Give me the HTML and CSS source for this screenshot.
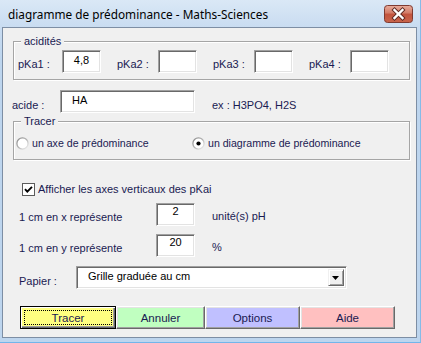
FILE: index.html
```html
<!DOCTYPE html>
<html lang="fr">
<head>
<meta charset="utf-8">
<title>diagramme de prédominance - Maths-Sciences</title>
<link rel="stylesheet" href="styles.css">
</head>
<body>
<div class="window">
  <div class="titlebar">
    <span class="title">diagramme de prédominance - Maths-Sciences</span>
    <div class="close">
      <svg width="29" height="18" viewBox="0 0 29 18">
        <defs>
          <linearGradient id="cg" x1="0" y1="0" x2="0" y2="1">
            <stop offset="0" stop-color="#e9ad9c"/>
            <stop offset="0.45" stop-color="#d27a66"/>
            <stop offset="0.5" stop-color="#c2533d"/>
            <stop offset="1" stop-color="#c8654c"/>
          </linearGradient>
        </defs>
        <rect x="0.5" y="0.5" width="28" height="17" rx="3" fill="url(#cg)" stroke="#7e3a31"/>
        <path d="M10.5 5 L18.5 13 M18.5 5 L10.5 13" stroke="#5b2720" stroke-width="4.2" stroke-linecap="square"/>
        <path d="M10.5 5 L18.5 13 M18.5 5 L10.5 13" stroke="#ffffff" stroke-width="2.4" stroke-linecap="square"/>
      </svg>
    </div>
  </div>
  <div class="client">
    <fieldset class="frame acid">
      <legend>acidités</legend>
      <div class="pka-row">
        <span class="lbl first">pKa1 :</span><div class="tb small center">4,8</div>
        <span class="lbl">pKa2 :</span><div class="tb small center"></div>
        <span class="lbl">pKa3 :</span><div class="tb small center"></div>
        <span class="lbl">pKa4 :</span><div class="tb small center"></div>
      </div>
    </fieldset>

    <div class="row acide-row">
      <span class="lbl acide-lbl">acide :</span>
      <div class="tb acide-tb">HA</div>
      <span class="lbl ex">ex : H3PO4, H2S</span>
    </div>

    <fieldset class="frame tracer">
      <legend>Tracer</legend>
      <div class="radio-row">
        <div class="opt first-opt">
          <svg class="radio" width="13" height="13" viewBox="0 0 13 13">
            <defs>
              <linearGradient id="rg" x1="0" y1="0" x2="1" y2="1">
                <stop offset="0" stop-color="#8a8a8a"/>
                <stop offset="0.5" stop-color="#b4b4b4"/>
                <stop offset="1" stop-color="#f4f4f4"/>
              </linearGradient>
            </defs>
            <circle cx="6.5" cy="6.5" r="5.6" fill="#ffffff" stroke="url(#rg)" stroke-width="1.3"/>
          </svg>
          <span class="lbl">un axe de prédominance</span>
        </div>
        <div class="opt">
          <svg class="radio" width="13" height="13" viewBox="0 0 13 13">
            <circle cx="6.5" cy="6.5" r="5.6" fill="#ffffff" stroke="url(#rg)" stroke-width="1.3"/>
            <circle cx="6.5" cy="6.5" r="2.1" fill="#000000"/>
          </svg>
          <span class="lbl">un diagramme de prédominance</span>
        </div>
      </div>
    </fieldset>

    <div class="check-row">
      <svg class="check" width="13" height="13" viewBox="0 0 13 13">
        <rect x="0.5" y="0.5" width="12" height="12" fill="#ffffff" stroke="#5c5c5c"/>
        <path d="M3 6.2 L5.3 8.6 L10 3.8" fill="none" stroke="#000000" stroke-width="1.9"/>
      </svg>
      <span class="lbl">Afficher les axes verticaux des pKai</span>
    </div>

    <div class="row scale-row">
      <span class="lbl scale-lbl">1 cm en x représente</span>
      <div class="tb small center tight">2</div>
      <span class="lbl unit">unité(s) pH</span>
    </div>

    <div class="row scale-row second">
      <span class="lbl scale-lbl">1 cm en y représente</span>
      <div class="tb small center tight">20</div>
      <span class="lbl unit">%</span>
    </div>

    <div class="row paper-row">
      <span class="lbl paper-lbl">Papier :</span>
      <div class="combo">
        <span class="combo-text">Grille graduée au cm</span>
        <div class="combo-btn">
          <svg width="8" height="5" viewBox="0 0 8 5"><path d="M0 0 H7 L3.5 4 Z" fill="#000000"/></svg>
        </div>
      </div>
    </div>

    <div class="buttons">
      <div class="btn default yellow"><span class="focus">Tracer</span></div>
      <div class="btn green w89">Annuler</div>
      <div class="btn blue">Options</div>
      <div class="btn pink">Aide</div>
    </div>
  </div>
</div>
</body>
</html>
```

FILE: styles.css
```css
html, body {
  margin: 0;
  padding: 0;
  background: #bfd6ee;
}

.window {
  width: 421px;
  height: 343px;
  box-sizing: border-box;
  padding: 0 3px 4px 2px;
  display: flex;
  flex-direction: column;
  background: linear-gradient(#dae8f6 0px, #c9dcf1 27px, #bdd5ee 60px);
  border-right: 1px solid #86bbe8;
  border-bottom: 1px solid #72b5ea;
}

.titlebar {
  height: 27px;
  flex: none;
  display: flex;
  align-items: center;
  justify-content: space-between;
  padding-left: 6px;
}

.title {
  font-family: "Noto Sans", "Open Sans", sans-serif;
  font-size: 11.8px;
  color: #000000;
  padding-top: 1px;
}

.close {
  width: 29px;
  height: 18px;
  margin-right: 4px;
  margin-top: 1px;
}
.close svg { display: block; }

.client {
  flex: 1;
  background: #f0f0f0;
  border: 1px solid #7d8ea4;
  font-family: "Liberation Sans", Arial, sans-serif;
  font-size: 11px;
  line-height: 13px;
  color: #1a1a52;
  display: flex;
  flex-direction: column;
  align-items: flex-start;
}

.lbl {
  white-space: nowrap;
  display: block;
}

/* frames */
.frame {
  margin: 0 0 0 10px;
  padding: 0;
  width: 397px;
  box-sizing: border-box;
  min-width: 0;
  border: 1px solid #a5a5a5;
  box-shadow: inset 1px 1px 0 #ffffff, 1px 1px 0 #ffffff;
}
.frame legend {
  margin-left: 7px;
  padding: 0 3px;
  font-size: 11px;
  line-height: 13px;
  background: #f0f0f0;
}

.acid { margin-top: 7px; }
.tracer { margin-top: 2px; }

.pka-row {
  display: flex;
  align-items: flex-start;
  padding: 2px 0 6px 4px;
}
.pka-row .lbl {
  width: 41px;
  padding-top: 8px;
}
.pka-row .lbl.first { width: 44px; }
.pka-row .tb { margin-right: 16px; }

/* text boxes */
.tb {
  height: 23px;
  box-sizing: border-box;
  background: #ffffff;
  border: 1px solid;
  border-color: #a0a0a0 #ffffff #ffffff #a0a0a0;
  box-shadow: inset 1px 1px 0 #696969, inset -1px -1px 0 #e3e3e3;
  color: #000000;
  padding-top: 3px;
  white-space: nowrap;
}
.tb.small { width: 39px; }
.tb.center { text-align: center; }
.tb.tight { padding-top: 1px; }

.row {
  display: flex;
  align-items: flex-start;
}

.acide-row {
  margin-top: 10px;
  padding-left: 9px;
}
.acide-lbl { width: 48px; padding-top: 9px; }
.acide-tb { width: 135px; padding-left: 11px; }
.ex { margin-left: 17px; padding-top: 9px; }

/* radios */
.radio-row {
  display: flex;
  align-items: center;
  padding: 9px 0 9px 2px;
}
.radio-row .lbl { font-size: 10.6px; }
.opt {
  display: flex;
  align-items: center;
  gap: 3px;
}
.first-opt { width: 176px; }
.radio { display: block; flex: none; }

/* checkbox */
.check-row {
  margin: 23px 0 0 19px;
  display: flex;
  align-items: center;
  gap: 3px;
  height: 13px;
}
.check { display: block; flex: none; }

/* scale rows */
.scale-row {
  margin-top: 7px;
  padding-left: 16px;
}
.scale-row.second { margin-top: 8px; }
.scale-lbl { width: 137px; padding-top: 8px; }
.unit { margin-left: 17px; padding-top: 7px; }

/* paper */
.paper-row {
  margin-top: 9px;
  padding-left: 16px;
}
.paper-lbl { width: 57px; padding-top: 9px; }
.combo {
  width: 271px;
  height: 23px;
  box-sizing: border-box;
  background: #ffffff;
  border: 1px solid;
  border-color: #a0a0a0 #ffffff #ffffff #a0a0a0;
  box-shadow: inset 1px 1px 0 #696969, inset -1px -1px 0 #e3e3e3;
  display: flex;
  align-items: stretch;
  justify-content: space-between;
  padding: 2px 2px 2px 11px;
  color: #000000;
}
.combo-text { padding-top: 1px; white-space: nowrap; }
.combo-btn {
  width: 16px;
  box-sizing: border-box;
  background: #f0f0f0;
  border: 1px solid;
  border-color: #f0f0f0 #696969 #696969 #f0f0f0;
  box-shadow: inset 1px 1px 0 #ffffff, inset -1px -1px 0 #a0a0a0;
  display: flex;
  align-items: center;
  justify-content: center;
  padding-top: 1px;
}
.combo-btn svg { display: block; }

/* buttons */
.buttons {
  margin: 17px 0 0 17px;
  display: flex;
}
.btn {
  width: 95px;
  height: 23px;
  box-sizing: border-box;
  border: 1px solid;
  border-color: #ffffff #696969 #696969 #ffffff;
  box-shadow: inset -1px -1px 0 #a0a0a0, inset 1px 1px 0 #e3e3e3;
  display: flex;
  align-items: center;
  justify-content: center;
  color: #1a1a52;
  font-size: 11.5px;
  padding-top: 1px;
}
.btn.w89 { width: 89px; }
.btn.default {
  width: 96px;
  border: 1px solid #000000;
  box-shadow: inset 1px 1px 0 #ffffff, inset -1px -1px 0 #696969, inset -2px -2px 0 #a0a0a0;
  padding: 3px;
}
.focus {
  flex: 1;
  align-self: stretch;
  display: flex;
  align-items: center;
  justify-content: center;
  border: 1px dotted #000000;
  padding-top: 1px;
}
.yellow { background: #ffff80; }
.green { background: #c0ffc0; }
.blue { background: #c0c0ff; }
.pink { background: #ffc0c0; }
```
